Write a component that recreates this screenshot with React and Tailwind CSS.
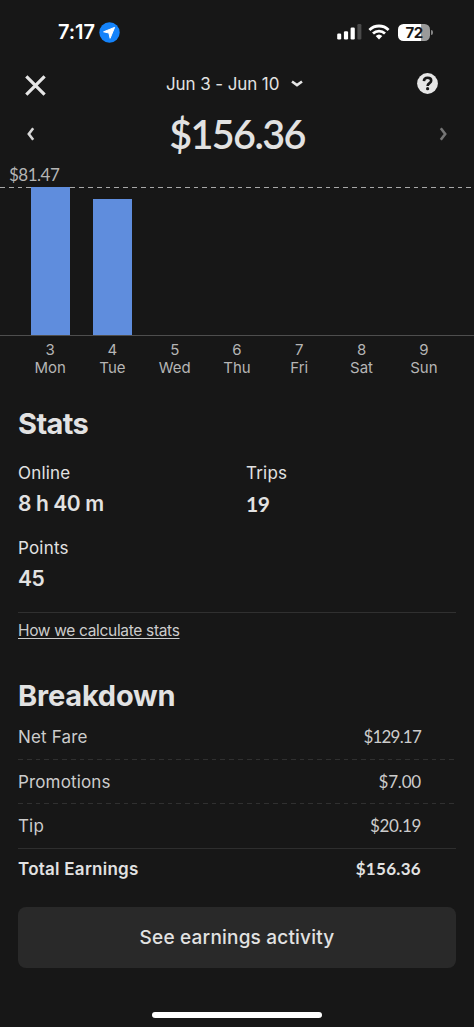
const days = [
  { date: 3, name: 'Mon', height: 148 },
  { date: 4, name: 'Tue', height: 136 },
  { date: 5, name: 'Wed', height: 0 },
  { date: 6, name: 'Thu', height: 0 },
  { date: 7, name: 'Fri', height: 0 },
  { date: 8, name: 'Sat', height: 0 },
  { date: 9, name: 'Sun', height: 0 },
]

const fares = [
  { label: 'Net Fare', amount: '$129.17', amountClass: 'tracking-[-0.8px]' },
  { label: 'Promotions', amount: '$7.00', amountClass: 'tracking-[-0.2px]' },
  { label: 'Tip', amount: '$20.19', amountClass: 'tracking-[-0.4px]' },
]

function StatusBar() {
  return (
    <div className="flex h-16 items-center pl-[58px] pr-[41px] text-white">
      <span className="w-[37px] text-[20px] leading-none font-semibold whitespace-nowrap tracking-[-0.1px]">7:17</span>
      <svg className="ml-[3.5px]" width="21" height="21" viewBox="0 0 21 21">
        <circle cx="10.5" cy="10.5" r="10.2" fill="#1483fb" />
        <path d="M15.6 5.4 4.6 9.8l5.3 1.2 1.2 5.3z" fill="#fff" stroke="#fff" strokeLinejoin="round" />
      </svg>
      <div className="ml-auto flex items-center">
        <svg width="25" height="18" viewBox="0 0 25 18">
          <rect x="0.2" y="10.5" width="4" height="6" rx="1.2" fill="#fff" />
          <rect x="6.9" y="8.2" width="4.2" height="8.3" rx="1.2" fill="#fff" />
          <rect x="13.6" y="4.6" width="4.2" height="11.9" rx="1.2" fill="#fff" />
          <rect x="20.4" y="1" width="4" height="15.5" rx="1.2" fill="#4a4a4a" />
        </svg>
        <svg className="ml-[6px]" width="22" height="18" viewBox="0 0 22 18" fill="none" stroke="#fff" strokeWidth="2.8">
          <path d="M1.4 6.9a13.8 13.8 0 0 1 19.2 0" />
          <path d="M5 10.5a8.7 8.7 0 0 1 12 0" />
          <path d="M11 16.4 7.7 13.1a4.8 4.8 0 0 1 6.6 0z" fill="#fff" stroke="none" />
        </svg>
        <div className="ml-[8px] flex h-[17px] w-8 items-center justify-center rounded-[5.5px] bg-[linear-gradient(90deg,#fff_73%,#9a9a9a_73%)] text-[15px] leading-none font-bold tracking-[-0.5px] text-[#171717]">
          72
        </div>
        <div className="ml-px h-[5px] w-[2px] rounded-r-full bg-[#858585]" />
      </div>
    </div>
  )
}

function Header() {
  return (
    <div className="flex h-10 items-center pl-[25px] pr-9">
      <svg className="mt-[3px]" width="21" height="21" viewBox="0 0 21 21" fill="none" stroke="#e6e6e6" strokeWidth="3.2">
        <path d="M1.3 1.3 19.6 19.6M19.6 1.3 1.3 19.6" />
      </svg>
      <div className="ml-[120px] flex items-center">
        <span className="text-[17px] leading-5 tracking-[-0.1px]">Jun 3 - Jun 10</span>
        <svg className="ml-[12px]" width="12" height="8" viewBox="0 0 12 8" fill="none" stroke="#e6e6e6" strokeWidth="2.6">
          <path d="m1 1.5 5 3.6 5-3.6" />
        </svg>
      </div>
      <svg className="mb-[1px] ml-auto" width="21" height="21" viewBox="0 0 21 21" fill="none">
        <circle cx="10.5" cy="10.5" r="10.4" fill="#e6e6e6" />
        <path d="M6.9 8.1c.1-2 1.6-3.3 3.7-3.3s3.6 1.2 3.6 2.9c0 2.4-3.6 2.4-3.6 5.2" stroke="#171717" strokeWidth="2.6" />
        <circle cx="10.6" cy="15.7" r="1.6" fill="#171717" />
      </svg>
    </div>
  )
}

function Total() {
  return (
    <div className="flex h-[61px] items-center justify-between pb-[2px] pl-[26px] pr-[26px]">
      <svg width="9" height="14" viewBox="0 0 9 14" fill="none" stroke="#d8d8d8" strokeWidth="2.6">
        <path d="M7.2 1.3 2.8 7l4.4 5.7" />
      </svg>
      <span className="font-[Lato] text-[39.5px] leading-none font-semibold tracking-[-1.6px]">$156.36</span>
      <svg width="9" height="14" viewBox="0 0 9 14" fill="none" stroke="#757575" strokeWidth="2.6">
        <path d="M1.8 1.3 6.2 7l-4.4 5.7" />
      </svg>
    </div>
  )
}

function Chart() {
  return (
    <div>
      <div className="h-[21.5px] pl-[9px] font-[Lato] text-[17px] leading-[19px] tracking-[-0.5px] text-[#b5b5b5]">$81.47</div>
      <div className="h-[1.5px] bg-[repeating-linear-gradient(90deg,#a8a8a8_0_4.8px,transparent_4.8px_8.8px)]" />
      <div className="flex h-[148px] items-end border-b border-[#4e4e4e] px-[19.5px]">
        {days.map((day) => (
          <div key={day.name} className="flex flex-1 justify-center">
            <div className="w-[39px] bg-[#5f8ddd]" style={{ height: day.height }} />
          </div>
        ))}
      </div>
      <div className="flex px-[19px] pt-[5px] pb-[1px] text-[15px] leading-[18px] text-[#b5b5b5]">
        {days.map((day) => (
          <div key={day.name} className="flex-1 text-center">
            <div>{day.date}</div>
            <div>{day.name}</div>
          </div>
        ))}
      </div>
    </div>
  )
}

function Stat({ label, children }) {
  return (
    <div className="h-[75px]">
      <div className="text-[17px] leading-5 tracking-[0.2px]">{label}</div>
      <div className="pt-[9px] text-[21px] leading-6 font-semibold tracking-[-0.4px]">{children}</div>
    </div>
  )
}

export default function App() {
  return (
    <div className="h-[1027px] w-[474px] overflow-hidden bg-[#171717] font-[Inter,sans-serif] text-[#e2e2e2]">
      <StatusBar />
      <Header />
      <Total />
      <Chart />

      <div className="px-[18px]">
        <h2 className="mt-[28px] text-[29px] leading-9 font-bold tracking-[-0.6px]">Stats</h2>
        <div className="mt-[21px] grid grid-cols-[228px_1fr]">
          <Stat label="Online">8 h 40 m</Stat>
          <Stat label="Trips">
            <span className="font-[Lato] font-bold tracking-[-0.5px]">19</span>
          </Stat>
          <Stat label="Points">45</Stat>
        </div>
        <div className="mt-[-1px] h-[34px] border-t border-[#303030] pt-[8px]">
          <a className="block text-[15.5px] leading-5 tracking-[-0.33px] text-[#cccccc] underline underline-offset-2">How we calculate stats</a>
        </div>

        <h2 className="mt-[32px] text-[29px] leading-9 font-bold tracking-[-0.2px]">Breakdown</h2>
        <div className="pt-[1.5px]">
          {fares.map((fare, i) => (
            <div key={fare.label} className="text-[17px] leading-5 text-[#cccccc]">
              <div className="flex h-[43.4px] items-center justify-between pr-[35px]">
                <span className="tracking-[0.15px]">{fare.label}</span>
                <span className={`font-[Lato] ${fare.amountClass}`}>{fare.amount}</span>
              </div>
              {i < fares.length - 1 ? (
                <div className="h-px bg-[repeating-linear-gradient(90deg,#303030_0_4.8px,transparent_4.8px_8.8px)]" />
              ) : (
                <div className="h-px bg-[#2e2e2e]" />
              )}
            </div>
          ))}
        </div>
        <div className="flex h-[41px] items-center justify-between pr-[35px] text-[17px] leading-5 font-semibold">
          <span className="tracking-[0.25px]">Total Earnings</span>
          <span className="font-[Lato] font-bold tracking-[0.3px]">$156.36</span>
        </div>
        <button className="mt-[17px] h-[61px] w-full rounded-lg bg-[#292929] pt-[2px] text-[19px] font-medium tracking-[0.2px]">See earnings activity</button>
      </div>
      <div className="mx-auto mt-[44px] h-[6px] w-[170px] rounded-full bg-white" />
    </div>
  )
}
